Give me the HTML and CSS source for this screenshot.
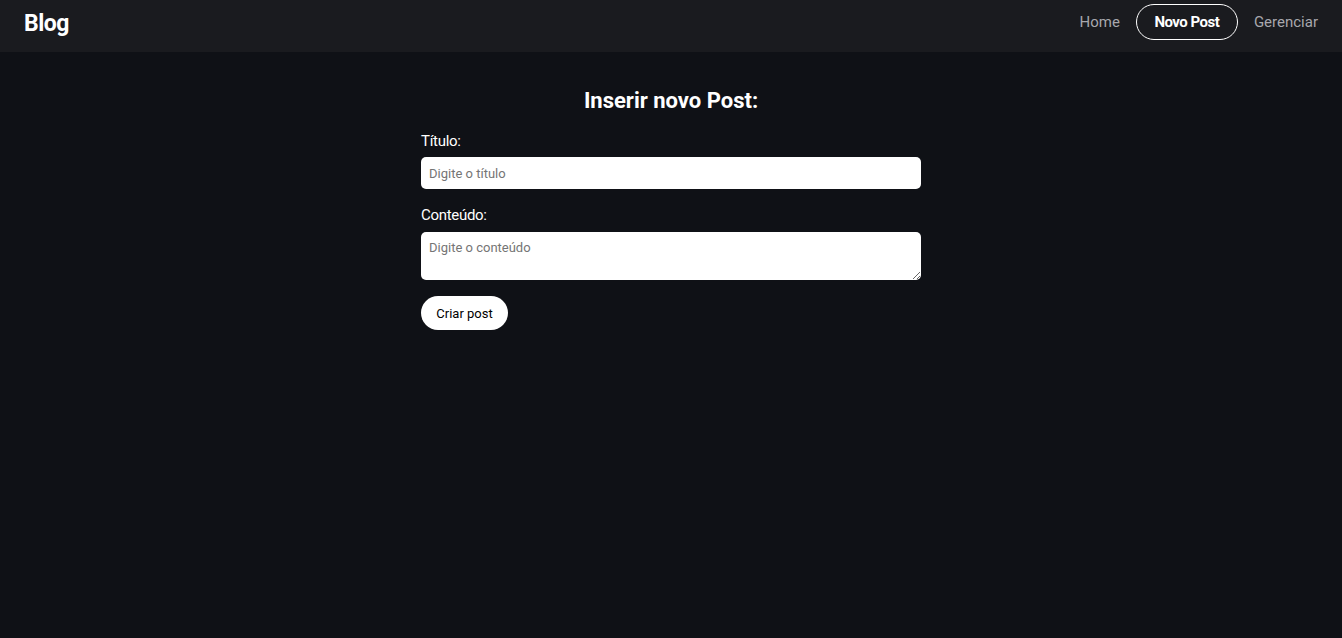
FILE: index.html
```html
<!DOCTYPE html>
<html lang="pt-BR">
<head>
<meta charset="utf-8">
<title>Blog</title>
<link rel="stylesheet" href="styles.css">
</head>
<body>
<nav class="navbar">
  <a class="brand" href="#">Blog</a>
  <ul class="nav-links">
    <li><a href="#" class="nav-link">Home</a></li>
    <li><a href="#" class="nav-link nav-btn">Novo Post</a></li>
    <li><a href="#" class="nav-link">Gerenciar</a></li>
  </ul>
</nav>
<main class="new-post">
  <h2 class="title">Inserir novo Post:</h2>
  <form class="form">
    <label class="field field-title">
      <span class="label">Título:</span>
      <input type="text" class="input" placeholder="Digite o título">
    </label>
    <label class="field field-content">
      <span class="label">Conteúdo:</span>
      <textarea class="textarea" placeholder="Digite o conteúdo"></textarea>
    </label>
    <button type="button" class="btn">Criar post</button>
  </form>
</main>
</body>
</html>
```

FILE: styles.css
```css
* { box-sizing: border-box; }
html, body { margin: 0; padding: 0; }
body {
  background: #0f1116;
  color: #fff;
  font-family: "Roboto", "Liberation Sans", sans-serif;
  min-height: 638px;
}
.navbar {
  height: 52px;
  background: #1a1b1f;
  display: flex;
  align-items: center;
  justify-content: space-between;
  padding: 0 24px;
}
.brand {
  color: #fff;
  text-decoration: none;
  font-weight: 700;
  font-size: 23px;
  letter-spacing: -0.5px;
  margin-top: -6px;
}
.nav-links {
  list-style: none;
  margin: 0;
  padding: 0;
  display: flex;
  align-items: center;
  gap: 16px;
  margin-top: -8px;
}
.nav-link {
  color: #a8a8ad;
  text-decoration: none;
  font-size: 15px;
  display: block;
}
.nav-btn {
  color: #fff;
  font-weight: 700;
  border: 1px solid #fff;
  border-radius: 18px;
  height: 36px;
  width: 102px;
  display: flex;
  align-items: center;
  justify-content: center;
  letter-spacing: -0.5px;
}
.new-post {
  width: 500px;
  margin: 0 auto;
  padding-top: 36px;
}
.title {
  text-align: center;
  font-size: 22px;
  font-weight: 700;
  margin: 0 0 18px;
  line-height: 26px;
}
.form {
  display: flex;
  flex-direction: column;
  align-items: flex-start;
}
.field {
  display: flex;
  flex-direction: column;
  width: 100%;
  margin-bottom: 16px;
}
.field-title { margin-bottom: 17px; }
.label {
  font-size: 15px;
  letter-spacing: -0.3px;
  line-height: 18px;
  margin-bottom: 7px;
}
.field-content .label { margin-bottom: 8px; }
.input, .textarea {
  width: 100%;
  border: none;
  border-radius: 5px;
  background: #fff;
  font-family: inherit;
  font-size: 13px;
  padding: 0 8px;
  color: #000;
  outline: none;
}
.input { height: 32px; }
.textarea {
  height: 48px;
  padding: 8px;
  resize: vertical;
}
.input::placeholder, .textarea::placeholder { color: #757575; }
.btn {
  background: #fff;
  color: #000;
  border: none;
  border-radius: 17px;
  width: 87px;
  height: 34px;
  font-family: inherit;
  font-size: 13px;
  cursor: pointer;
}
```
